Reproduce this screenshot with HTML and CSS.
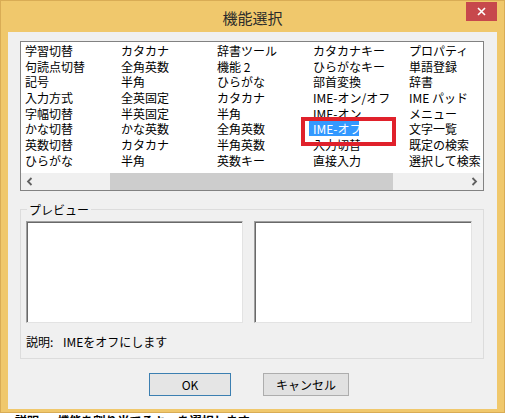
FILE: index.html
```html
<!DOCTYPE html>
<html lang="ja">
<head>
  <meta charset="UTF-8">
  <title>機能選択</title>
  <link rel="stylesheet" href="styles.css">
</head>
<body>
  <div class="window">
    <div class="titlebar">
      <span></span>
      <span class="title">機能選択</span>
      <button class="close" aria-label="閉じる">
        <svg width="9" height="9" viewBox="0 0 9 9"><path d="M1 1 L8 8 M8 1 L1 8" stroke="#fff" stroke-width="1.6"/></svg>
      </button>
    </div>

    <div class="client">
      <div class="listbox">
        <div class="items">
          <span>学習切替</span><span>句読点切替</span><span>記号</span><span>入力方式</span>
          <span>字幅切替</span><span>かな切替</span><span>英数切替</span><span>ひらがな</span>

          <span>カタカナ</span><span>全角英数</span><span>半角</span><span>全英固定</span>
          <span>半英固定</span><span>かな英数</span><span>カタカナ</span><span>半角</span>

          <span>辞書ツール</span><span>機能 2</span><span>ひらがな</span><span>カタカナ</span>
          <span>半角</span><span>全角英数</span><span>半角英数</span><span>英数キー</span>

          <span>カタカナキー</span><span>ひらがなキー</span><span>部首変換</span><span>IME-オン/オフ</span>
          <span>IME-オン</span><span><em class="selected">IME-オフ</em></span><span>入力切替</span><span>直接入力</span>

          <span>プロパティ</span><span>単語登録</span><span>辞書</span><span>IME パッド</span>
          <span>メニュー</span><span>文字一覧</span><span>既定の検索</span><span>選択して検索</span>
        </div>
        <div class="hscroll">
          <span class="arrow">
            <svg width="7" height="9" viewBox="0 0 7 9"><path d="M5.5 1 L2 4.5 L5.5 8" fill="none" stroke="#606060" stroke-width="1.8"/></svg>
          </span>
          <div class="track"><div class="thumb"></div></div>
          <span class="arrow">
            <svg width="7" height="9" viewBox="0 0 7 9"><path d="M1.5 1 L5 4.5 L1.5 8" fill="none" stroke="#606060" stroke-width="1.8"/></svg>
          </span>
        </div>
      </div>

      <!-- annotation drawn over the list -->
      <div class="marker"></div>

      <div class="group">
        <span class="group-label">プレビュー</span>
        <div class="previews">
          <div class="preview-box"></div>
          <div class="preview-box wide"></div>
        </div>
        <div class="desc">
          <span class="desc-label">説明:</span>
          <span>IMEをオフにします</span>
        </div>
      </div>

      <div class="buttons">
        <button class="btn default">OK</button>
        <button class="btn cancel">キャンセル</button>
      </div>
    </div>
  </div>

  <div class="behind">説明:　 機能を割り当てるキーを選択します</div>
</body>
</html>
```

FILE: styles.css
```css
body {
  margin: 0;
  background: #fff;
  font-family: "Noto Sans CJK JP", sans-serif;
  font-size: 12px;
  color: #000;
}

.window {
  width: 505px;
  height: 413px;
  box-sizing: border-box;
  background: #f0c86c;
  border: 1px solid #d9ac55;
  display: flex;
  flex-direction: column;
  overflow: hidden;
}

.titlebar {
  height: 31px;
  flex: none;
  display: grid;
  grid-template-columns: 1fr auto 1fr;
  align-items: start;
}

.title {
  padding-top: 7px;
  font-size: 15px;
  line-height: 20px;
  color: #2b2b2b;
}

.close {
  justify-self: end;
  margin: 1px 7px 0 0;
  width: 31px;
  height: 19px;
  border: none;
  padding: 0;
  background: #c7484c;
  display: flex;
  align-items: center;
  justify-content: center;
}

.client {
  position: relative;
  margin: 0 7px;
  height: 377px;
  flex: none;
  background: #f0f0f0;
  padding: 9px 0 0 12px;
  box-sizing: border-box;
}

/* list */
.listbox {
  width: 464px;
  height: 150px;
  box-sizing: border-box;
  border: 1px solid #828282;
  background: #fff;
  display: flex;
  flex-direction: column;
}

.items {
  height: 131px;
  padding-top: 1px;
  box-sizing: border-box;
  display: grid;
  grid-template-rows: repeat(8, 15.7px);
  grid-auto-flow: column;
  grid-auto-columns: 96px;
  line-height: 15px;
  white-space: nowrap;
}

.items span {
  padding-left: 4px;
}

.selected {
  font-style: normal;
  display: inline-block;
  margin-left: -4px;
  padding: 0 4px 0 4px;
  width: 42px;
  background: #3399ff;
  color: #fff;
}

.hscroll {
  height: 17px;
  display: flex;
  background: #f0f0f0;
}

.arrow {
  width: 17px;
  display: flex;
  align-items: center;
  justify-content: center;
}

.track {
  flex: 1;
}

.thumb {
  margin-left: 72px;
  width: 283px;
  height: 17px;
  background: #cdcdcd;
}

.marker {
  position: absolute;
  left: 293px;
  top: 85px;
  width: 95px;
  height: 29px;
  box-sizing: border-box;
  border: 4px solid #e0212b;
}

/* preview group */
.group {
  margin-top: 18px;
  width: 464px;
  height: 150px;
  box-sizing: border-box;
  border: 1px solid #dcdcdc;
  padding-left: 5px;
}

.group-label {
  display: block;
  width: fit-content;
  margin: -8px 0 0 1px;
  padding: 0 2px;
  line-height: 15px;
  background: #f0f0f0;
}

.previews {
  margin-top: 4px;
  display: flex;
  gap: 11px;
}

.preview-box {
  width: 217px;
  height: 102px;
  box-sizing: border-box;
  background: #fff;
  border: 1px solid;
  border-color: #a0a0a0 #e3e3e3 #e3e3e3 #a0a0a0;
  box-shadow: inset 1px 1px #696969;
}

.preview-box.wide {
  width: 218px;
}

.desc {
  margin-top: 11px;
  line-height: 15px;
  display: flex;
}

.desc-label {
  width: 37px;
}

/* buttons */
.buttons {
  margin: 14px 0 0 129px;
  display: flex;
  gap: 32px;
}

.btn {
  height: 23px;
  padding: 0;
  font-family: inherit;
  font-size: 12px;
  color: #000;
  border: 1px solid #adadad;
  background: #e1e1e1;
}

.btn.default {
  width: 82px;
  border-color: #3c7fb1;
  background: #e5e5e5;
}

.btn.cancel {
  width: 86px;
}

/* window lying behind the dialog, only its top edge shows */
.behind {
  height: 5px;
  overflow: hidden;
  padding: 2px 0 0 15px;
  box-sizing: border-box;
  line-height: 12px;
  font-size: 12px;
  font-weight: bold;
  white-space: nowrap;
}
```
